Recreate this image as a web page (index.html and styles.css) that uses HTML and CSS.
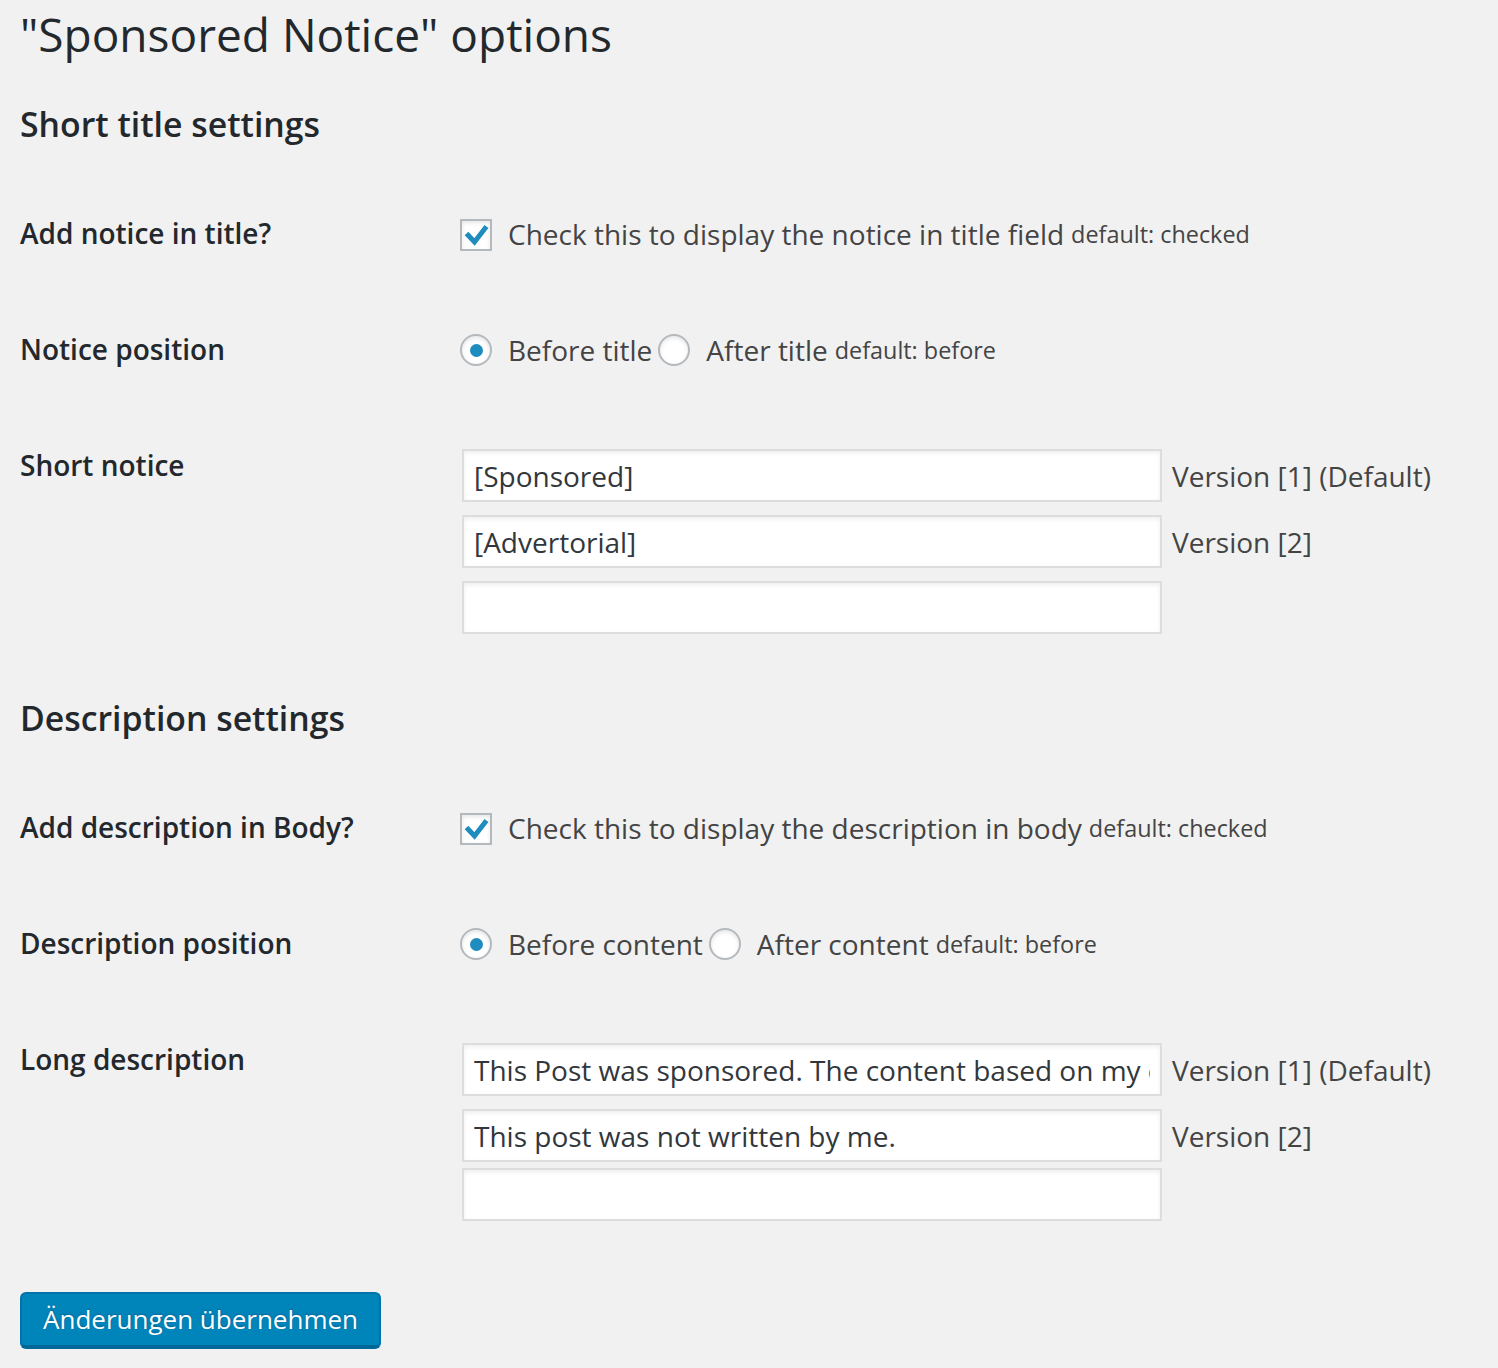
FILE: index.html
```html
<!DOCTYPE html>
<html lang="en">
<head>
<meta charset="utf-8">
<title>Sponsored Notice options</title>
<link rel="stylesheet" href="styles.css">
</head>
<body>
<div class="wrap">
  <h1 class="page-title">"Sponsored Notice" options</h1>

  <h2 class="section-title first">Short title settings</h2>
  <div class="form-table">
    <div class="row">
      <div class="th">Add notice in title?</div>
      <div class="td">
        <label class="line">
          <span class="checkbox"><svg viewBox="0 0 28 28" width="28" height="28"><polyline points="4.5,12.5 12.5,21 24.5,5.5" fill="none" stroke="#1e8cbe" stroke-width="5"/></svg></span>
          <span class="desc">Check this to display the notice in title field</span>
          <span class="small">default: checked</span>
        </label>
      </div>
    </div>
    <div class="row">
      <div class="th">Notice position</div>
      <div class="td">
        <div class="line">
          <span class="radio checked"></span>
          <span class="desc">Before title</span>
          <span class="radio"></span>
          <span class="desc">After title</span>
          <span class="small">default: before</span>
        </div>
      </div>
    </div>
    <div class="row">
      <div class="th">Short notice</div>
      <div class="td">
        <div class="inputs">
          <div class="input-line"><input class="input" type="text" value="[Sponsored]"><span class="version">Version [1] (Default)</span></div>
          <div class="input-line"><input class="input" type="text" value="[Advertorial]"><span class="version">Version [2]</span></div>
          <div class="input-line"><input class="input" type="text" value=""></div>
        </div>
      </div>
    </div>
  </div>

  <h2 class="section-title">Description settings</h2>
  <div class="form-table">
    <div class="row">
      <div class="th">Add description in Body?</div>
      <div class="td">
        <label class="line">
          <span class="checkbox"><svg viewBox="0 0 28 28" width="28" height="28"><polyline points="4.5,12.5 12.5,21 24.5,5.5" fill="none" stroke="#1e8cbe" stroke-width="5"/></svg></span>
          <span class="desc">Check this to display the description in body</span>
          <span class="small">default: checked</span>
        </label>
      </div>
    </div>
    <div class="row">
      <div class="th">Description position</div>
      <div class="td">
        <div class="line">
          <span class="radio checked"></span>
          <span class="desc">Before content</span>
          <span class="radio"></span>
          <span class="desc">After content</span>
          <span class="small">default: before</span>
        </div>
      </div>
    </div>
    <div class="row">
      <div class="th">Long description</div>
      <div class="td">
        <div class="inputs">
          <div class="input-line"><input class="input" type="text" value="This Post was sponsored. The content based on my own opinion."><span class="version">Version [1] (Default)</span></div>
          <div class="input-line"><input class="input" type="text" value="This post was not written by me."><span class="version">Version [2]</span></div>
          <div class="input-line tight"><input class="input" type="text" value=""></div>
        </div>
      </div>
    </div>
  </div>

  <div class="submit">
    <button class="button-primary" type="button">Änderungen übernehmen</button>
  </div>
</div>
</body>
</html>
```

FILE: styles.css
```css
html, body {
  margin: 0;
  padding: 0;
  background: #f1f1f1;
}
body {
  font-family: "Open Sans", "Noto Sans", sans-serif;
  color: #444;
}
.wrap {
  padding: 0 20px;
}
.page-title {
  margin: 0;
  padding-top: 5px;
  font-size: 46px;
  font-weight: 400;
  line-height: 58px;
  color: #23282d;
}
.section-title {
  margin: 34px 0 0;
  font-size: 33.8px;
  font-weight: 600;
  line-height: 44px;
  color: #23282d;
}
.section-title.first {
  margin-top: 39px;
}
.form-table {
  margin-top: 29px;
}
.row {
  display: grid;
  grid-template-columns: 440px 1fr;
  padding: 30px 0 28px;
}
.th {
  padding-top: 10px;
  font-size: 28px;
  font-weight: 600;
  line-height: 36px;
  color: #23282d;
}
.line {
  display: flex;
  align-items: center;
  height: 58px;
  font-size: 28px;
  color: #444;
  white-space: nowrap;
}
.checkbox {
  box-sizing: border-box;
  width: 32px;
  height: 32px;
  margin-top: 2px;
  border: 2px solid #b4b9be;
  background: #fff;
  box-shadow: inset 0 2px 4px rgba(0,0,0,.1);
  display: flex;
  align-items: center;
  justify-content: center;
  margin-right: 16px;
  flex: none;
}
.checkbox svg {
  display: block;
}
.radio {
  box-sizing: border-box;
  width: 32px;
  height: 32px;
  border: 2px solid #b4b9be;
  border-radius: 50%;
  background: #fff;
  box-shadow: inset 0 2px 4px rgba(0,0,0,.1);
  margin-right: 16px;
  flex: none;
  display: flex;
  align-items: center;
  justify-content: center;
}
.radio.checked::after {
  content: "";
  width: 13px;
  height: 13px;
  border-radius: 50%;
  background: #1e8cbe;
}
.desc + .radio {
  margin-left: 6px;
}
.small {
  font-size: 23.4px;
  margin-left: 7px;
}
.inputs {
  padding-top: 12px;
  display: flex;
  flex-direction: column;
  gap: 13px;
}
.input-line {
  display: flex;
  align-items: center;
}
.input-line.tight {
  margin-top: -7px;
}
.input {
  box-sizing: border-box;
  width: 700px;
  height: 53px;
  margin: 0 0 0 2px;
  padding: 0 10px;
  border: 2px solid #ddd;
  border-radius: 0;
  outline: none;
  background: #fff;
  box-shadow: inset 0 2px 4px rgba(0,0,0,.07);
  font-family: "Open Sans", "Noto Sans", sans-serif;
  font-size: 28px;
  color: #32373c;
  flex: none;
}
.version {
  margin-left: 10px;
  font-size: 28px;
  color: #444;
  white-space: nowrap;
}
.submit {
  padding-top: 43px;
}
.button-primary {
  box-sizing: border-box;
  height: 57px;
  padding: 0 21px 2px;
  border: 2px solid #0073aa;
  border-bottom-width: 4px;
  border-bottom-color: #006799;
  border-radius: 6px;
  background: #0085ba;
  color: #fff;
  font-family: "Open Sans", "Noto Sans", sans-serif;
  font-size: 26px;
  line-height: 48px;
  text-shadow: 0 -1px 2px #006799;
}
```
